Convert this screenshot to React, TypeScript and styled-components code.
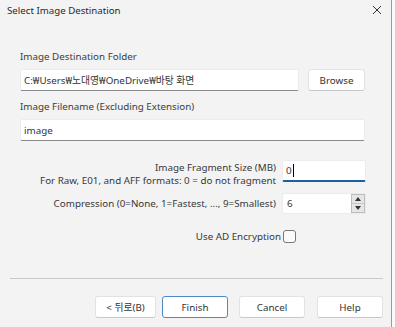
import React from "react";
import styled, { createGlobalStyle } from "styled-components";

const Global = createGlobalStyle`
  html, body { margin: 0; padding: 0; background: #f9f9fb; }
  body { font-family: "Noto Sans", "Noto Sans CJK KR", sans-serif; }
`;

const Window = styled.div`
  width: 391px;
  height: 327px;
  background: #f3f3f3;
  border-right: 1px solid #9a9a9a;
  display: flex;
  flex-direction: column;
  color: #383838;
  font-size: 9.8px;
  overflow: hidden;
`;

const TitleBar = styled.div`
  height: 20px;
  display: flex;
  align-items: center;
  justify-content: space-between;
  padding: 0 9px 0 7px;
  background: #f3f3f4;
  font-size: 9.7px;
  color: #2a2a2a;
`;

const CloseIcon = styled.svg`
  width: 10px;
  height: 10px;
`;

const Content = styled.div`
  display: flex;
  flex-direction: column;
  padding: 30px 26px 0 20px;
`;

const Label = styled.div`
  height: 14px;
  line-height: 14px;
  font-size: 9.8px;
  color: #3c3c3c;
  margin-bottom: 5px;
`;

const Row = styled.div`
  display: flex;
  gap: 9px;
  margin-bottom: 9px;
`;

const TextBox = styled.div<{ $focused?: boolean }>`
  flex: 1;
  height: 22px;
  box-sizing: border-box;
  background: #fff;
  border: 1px solid #ececec;
  border-bottom: ${(p) => (p.$focused ? "2px solid #1a5fa8" : "1px solid #8a8a8a")};
  border-radius: 2px;
  display: flex;
  align-items: center;
  padding: 0 3px;
  font-size: 9.8px;
  color: #333;
  white-space: nowrap;
  overflow: hidden;
`;

const Caret = styled.span`
  display: inline-block;
  width: 1px;
  height: 13px;
  background: #000;
  margin-left: 1px;
`;

const Button = styled.div<{ $primary?: boolean; $w?: number; $ml?: number }>`
  width: ${(p) => p.$w ?? 57}px;
  margin-left: ${(p) => p.$ml ?? 0}px;
  height: 22px;
  box-sizing: border-box;
  background: #fff;
  border: 1px solid ${(p) => (p.$primary ? "#4a8ac6" : "#e2e2e2")};
  border-bottom-color: ${(p) => (p.$primary ? "#4a8ac6" : "#c8c8c8")};
  border-radius: 3px;
  display: flex;
  align-items: center;
  justify-content: center;
  font-size: 9.8px;
  color: #333;
`;

const Options = styled.div`
  display: grid;
  grid-template-columns: 1fr 84px;
  column-gap: 6px;
  margin-top: 10px;
  margin-right: -1px;
`;

const RightLabel = styled.div<{ $top?: number }>`
  text-align: right;
  font-size: 9.8px;
  line-height: 13px;
  color: #383838;
  padding-top: ${(p) => p.$top ?? 0}px;
`;

const Cell = styled.div<{ $mb?: number }>`
  margin-bottom: ${(p) => p.$mb ?? 0}px;
`;

const Spin = styled.div`
  display: flex;
  height: 21px;
  box-sizing: border-box;
  background: #fff;
  border: 1px solid #ececec;
  width: 84px;
`;

const SpinText = styled.div`
  flex: 1;
  padding: 0 4px;
  display: flex;
  align-items: center;
  font-size: 9.8px;
`;

const SpinButtons = styled.div`
  width: 12px;
  display: flex;
  flex-direction: column;
  border: 1px solid #bdbdbd;
  background: #e6e6e6;
`;

const SpinBtn = styled.div<{ $top?: boolean }>`
  flex: 1;
  display: flex;
  align-items: center;
  justify-content: center;
  border-bottom: ${(p) => (p.$top ? "1px solid #c8c8c8" : "none")};
`;

const CheckRow = styled.div`
  display: flex;
  align-items: center;
  justify-content: flex-end;
  gap: 2px;
  grid-column: 1 / 3;
  margin-right: 70px;
`;

const CheckBox = styled.div`
  width: 11px;
  height: 11px;
  border: 1px solid #777;
  border-radius: 3px;
  background: #fbfbfb;
`;

const Separator = styled.div`
  height: 1px;
  background: #c9c9c9;
  margin: 35px 8px 0 10px;
`;

const ButtonBar = styled.div`
  display: flex;
  justify-content: flex-end;
  padding: 17px 8px 0 0;
`;

export default function App() {
  return (
    <>
      <Global />
      <Window>
        <TitleBar>
          <span>Select Image Destination</span>
          <CloseIcon viewBox="0 0 10 10">
            <path d="M1 1 L9 9 M9 1 L1 9" stroke="#333" strokeWidth="1" fill="none" />
          </CloseIcon>
        </TitleBar>
        <Content>
          <Label>Image Destination Folder</Label>
          <Row>
            <TextBox>C:₩Users₩노대영₩OneDrive₩바탕 화면</TextBox>
            <Button $w={57}>Browse</Button>
          </Row>
          <Label>Image Filename (Excluding Extension)</Label>
          <Row>
            <TextBox>image</TextBox>
          </Row>
          <Options>
            <Cell $mb={6}>
              <RightLabel $top={1}>
                Image Fragment Size (MB)
                <br />
                For Raw, E01, and AFF formats: 0 = do not fragment
              </RightLabel>
            </Cell>
            <Cell $mb={6}>
              <TextBox $focused>
                0<Caret />
              </TextBox>
            </Cell>
            <Cell $mb={16}>
              <RightLabel $top={4}>Compression (0=None, 1=Fastest, ..., 9=Smallest)</RightLabel>
            </Cell>
            <Cell $mb={16}>
              <Spin>
                <SpinText>6</SpinText>
                <SpinButtons>
                  <SpinBtn $top>
                    <svg width="6" height="4" viewBox="0 0 6 4">
                      <path d="M0 4 L3 0 L6 4 Z" fill="#333" />
                    </svg>
                  </SpinBtn>
                  <SpinBtn>
                    <svg width="6" height="4" viewBox="0 0 6 4">
                      <path d="M0 0 L3 4 L6 0 Z" fill="#333" />
                    </svg>
                  </SpinBtn>
                </SpinButtons>
              </Spin>
            </Cell>
            <CheckRow>
              <RightLabel>Use AD Encryption</RightLabel>
              <CheckBox />
            </CheckRow>
          </Options>
        </Content>
        <Separator />
        <ButtonBar>
          <Button $w={61}>&lt; 뒤로(B)</Button>
          <Button $primary $w={66} $ml={6}>Finish</Button>
          <Button $w={66} $ml={11}>Cancel</Button>
          <Button $w={66} $ml={12}>Help</Button>
        </ButtonBar>
      </Window>
    </>
  );
}
